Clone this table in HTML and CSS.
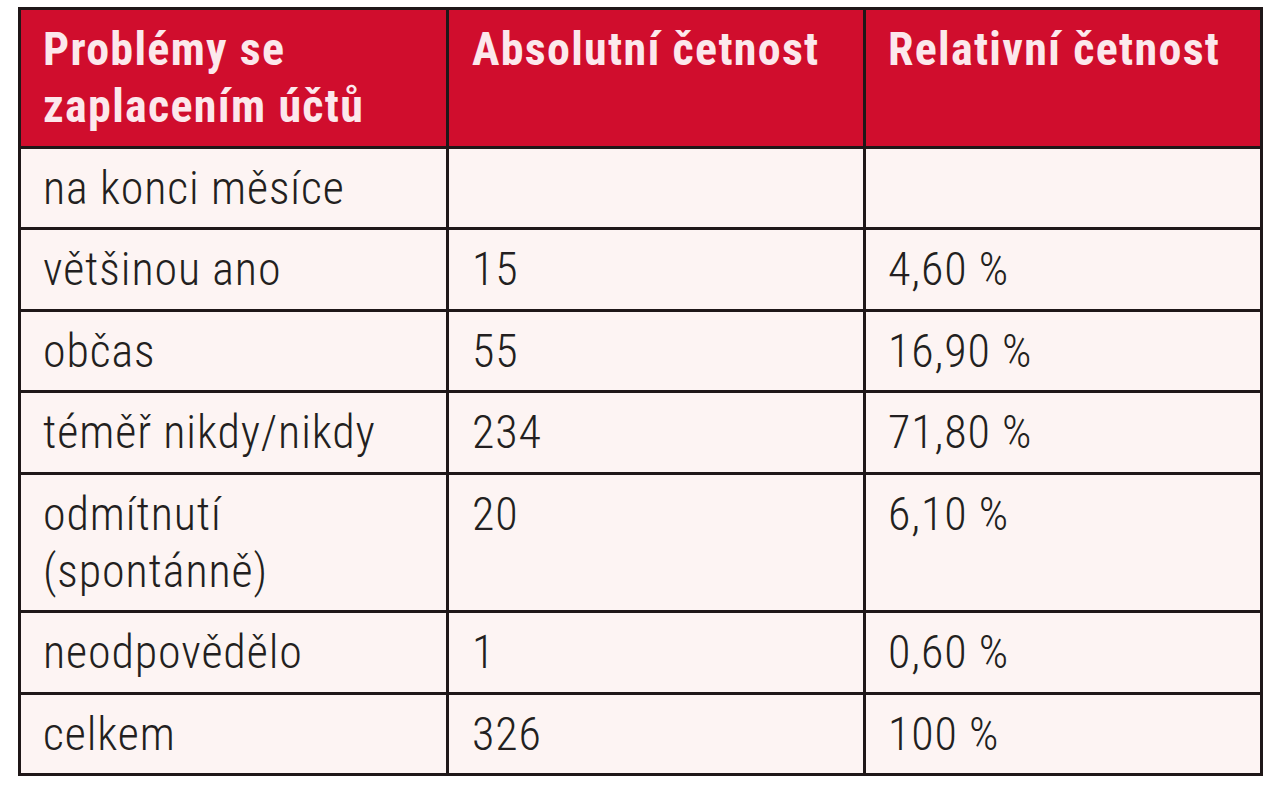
FILE: index.html
```html
<!DOCTYPE html>
<html lang="cs">
<head>
<meta charset="utf-8">
<link rel="stylesheet" href="styles.css">
</head>
<body>
<table class="stats">
  <colgroup>
    <col class="c1">
    <col class="c2">
    <col class="c3">
  </colgroup>
  <thead>
    <tr>
      <th>Problémy se<br>zaplacením účtů</th>
      <th class="mid">Absolutní četnost</th>
      <th class="last">Relativní četnost</th>
    </tr>
  </thead>
  <tbody>
    <tr><td>na konci měsíce</td><td class="mid"></td><td class="last"></td></tr>
    <tr><td>většinou ano</td><td class="mid">15</td><td class="last">4,60 %</td></tr>
    <tr><td>občas</td><td class="mid">55</td><td class="last">16,90 %</td></tr>
    <tr><td>téměř nikdy/nikdy</td><td class="mid">234</td><td class="last">71,80 %</td></tr>
    <tr><td>odmítnutí<br>(spontánně)</td><td class="mid">20</td><td class="last">6,10 %</td></tr>
    <tr><td>neodpovědělo</td><td class="mid">1</td><td class="last">0,60 %</td></tr>
    <tr><td>celkem</td><td class="mid">326</td><td class="last">100 %</td></tr>
  </tbody>
</table>
</body>
</html>
```
FILE: styles.css
```css
html, body {
  margin: 0;
  padding: 0;
  background: #ffffff;
}

body {
  padding: 7px 0 0 18px;
}

.stats {
  border-collapse: separate;
  border-spacing: 0;
  table-layout: fixed;
  width: 1245px;
  border-top: 3px solid #1f1718;
  border-left: 3px solid #1f1718;
}

.c1 { width: 428px; }
.c2 { width: 417px; }
.c3 { width: 397px; }

.stats th,
.stats td {
  border-right: 3px solid #1f1718;
  border-bottom: 3px solid #1f1718;
  padding: 11px 10px 10.5px 22px;
  line-height: 57px;
  text-align: left;
  vertical-align: top;
  box-sizing: border-box;
  white-space: nowrap;
}

.stats th {
  background: #d00d2d;
  color: #fce8ec;
  font-family: "Roboto Condensed", "Liberation Sans Narrow", sans-serif;
  font-weight: 700;
  font-size: 46px;
  letter-spacing: 1.3px;
}

.stats td {
  background: #fdf4f3;
  color: #231f20;
  font-family: "Roboto Condensed", "Liberation Sans Narrow", sans-serif;
  font-weight: 300;
  font-size: 46px;
  letter-spacing: 0.9px;
  height: 81.5px;
}

.stats .mid {
  padding-left: 23px;
}

.stats .last {
  padding-left: 22px;
}
```
